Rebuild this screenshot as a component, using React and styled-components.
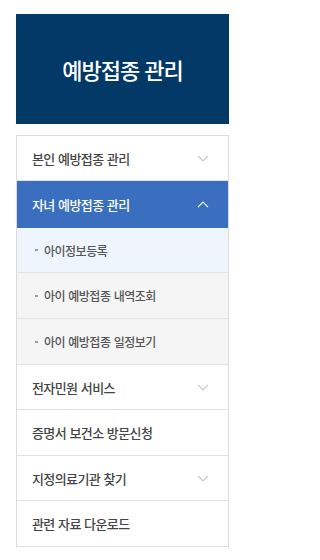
import React from "react";
import styled, { createGlobalStyle } from "styled-components";

//* Style
const GlobalStyle = createGlobalStyle`
  body {
    margin: 0;
    background: #ffffff;
    font-family: "Noto Sans CJK KR", "Noto Sans", sans-serif;
  }
`;

const Side = styled.aside`
  width: 213px;
  padding: 14px 0 0 16px;
`;

const Title = styled.div`
  height: 110px;
  background: #023966;
  color: #ffffff;
  display: flex;
  justify-content: center;
  align-items: center;
  font-size: 22px;
  font-weight: 500;
  letter-spacing: -1px;
  word-spacing: 1px;
`;

const Menu = styled.ul`
  list-style: none;
  margin: 11px 0 0;
  padding: 0;
  border: 1px solid #dcdcdc;
  border-bottom: none;
`;

const Row = styled.li`
  box-sizing: border-box;
  height: ${({ $h }) => $h}px;
  display: flex;
  align-items: center;
  justify-content: space-between;
  padding: 0 19px 0 15px;
  border-bottom: 1px solid #dfdfdf;
  font-size: 13px;
  font-weight: 500;
  letter-spacing: -0.6px;
  word-spacing: 1px;
  color: ${({ $active }) => ($active ? "#ffffff" : "#444444")};
  background: ${({ $active }) => ($active ? "#3a6fbf" : "#ffffff")};
  border-bottom-color: ${({ $active }) => ($active ? "#3a6fbf" : "#dfdfdf")};
`;

const SubRow = styled.li`
  box-sizing: border-box;
  height: ${({ $h }) => $h}px;
  display: flex;
  align-items: center;
  padding: 0 0 0 18px;
  border-bottom: 1px solid #e4e4e4;
  font-size: 12px;
  font-weight: 500;
  letter-spacing: -0.5px;
  word-spacing: 1px;
  color: #555555;
  background: ${({ $on }) => ($on ? "#eef5fd" : "#f5f5f5")};

  &::before {
    content: "";
    width: 3px;
    height: 2px;
    background: #9a9a9a;
    margin-right: 6px;
  }
`;

const Arrow = styled.svg`
  width: 12px;
  height: 7px;
  flex-shrink: 0;
`;

//* JSX
function Chevron({ up, color }) {
  return (
    <Arrow viewBox="0 0 12 7">
      <path
        d={up ? "M1 6.2 L6 1 L11 6.2" : "M1 0.8 L6 6 L11 0.8"}
        fill="none"
        stroke={color}
        strokeWidth="1.1"
      />
    </Arrow>
  );
}

const subs = [
  { label: "아이정보등록", on: true, h: 45 },
  { label: "아이 예방접종 내역조회", h: 46 },
  { label: "아이 예방접종 일정보기", h: 46 },
];

const rest = [
  { label: "전자민원 서비스", arrow: true, h: 45 },
  { label: "증명서 보건소 방문신청", h: 46 },
  { label: "지정의료기관 찾기", arrow: true, h: 45 },
  { label: "관련 자료 다운로드", h: 46 },
];

function App() {
  return (
    <>
      <GlobalStyle />
      <Side>
        <Title>예방접종 관리</Title>
        <Menu>
          <Row $h={45}>
            본인 예방접종 관리
            <Chevron color="#c4c4c4" />
          </Row>
          <Row $h={47} $active>
            자녀 예방접종 관리
            <Chevron up color="#ffffff" />
          </Row>
          {subs.map(({ label, on, h }) => (
            <SubRow key={label} $on={on} $h={h}>
              {label}
            </SubRow>
          ))}
          {rest.map(({ label, arrow, h }) => (
            <Row key={label} $h={h}>
              {label}
              {arrow && <Chevron color="#c4c4c4" />}
            </Row>
          ))}
        </Menu>
      </Side>
    </>
  );
}

export default App;
